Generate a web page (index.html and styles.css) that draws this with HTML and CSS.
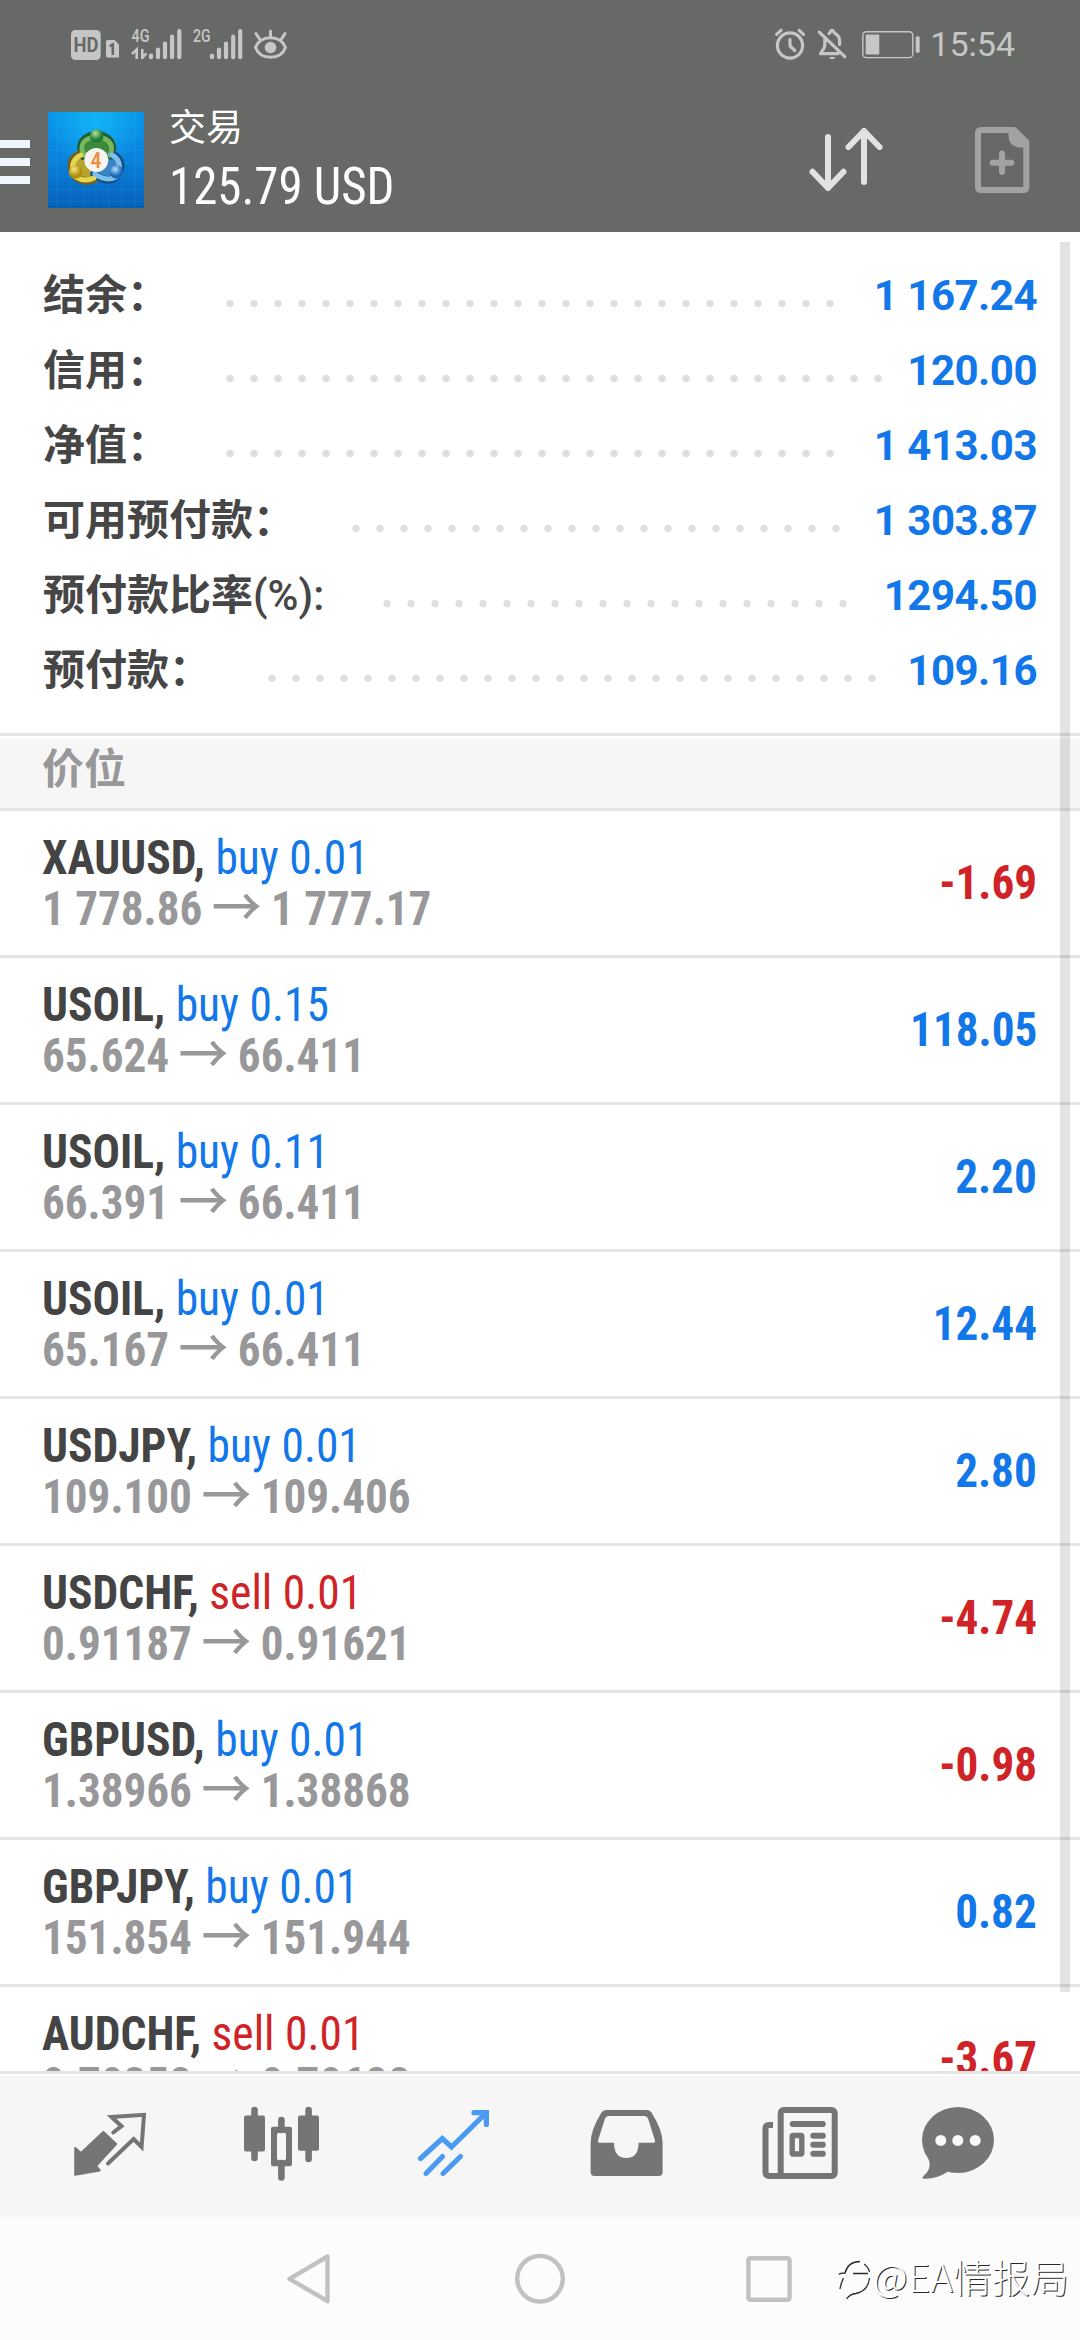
FILE: index.html
```html
<!DOCTYPE html>
<html lang="zh-CN">
<head>
<meta charset="utf-8">
<title>交易</title>
<link rel="stylesheet" href="styles.css">
</head>
<body>
<div class="screen">
  <header class="header">
    <div class="status">
      <div class="status-group">
        <svg class="ic-left" viewBox="70 24 220 40" width="220" height="40">
          <rect x="71" y="30" width="29.7" height="30" rx="4.500" fill="#c6c6c6"/>
          <text x="73.500" y="52" class="hd-text" textLength="25" lengthAdjust="spacingAndGlyphs">HD</text>
          <path d="M107.500 40H114.500L119 44.500V57.500H107.500Q106 57.500 106 56V41.500Q106 40 107.500 40Z" fill="#c6c6c6"/>
          <path d="M109.800 46.200L112.800 44.500V55" fill="none" stroke="#676966" stroke-width="2.600"/>
          <text x="131.500" y="42.300" class="net-text" textLength="18" lengthAdjust="spacingAndGlyphs">4G</text>
          <path d="M132 54L136.700 49.500V59M142.300 49V59M142.300 57.500L146.500 53.300" fill="none" stroke="#c6c6c6" stroke-width="2.600"/>
          <g stroke="#c6c6c6" stroke-width="4.200" stroke-linecap="round">
            <path d="M151 55.500V57.200M158 49.500V57.200M165 43.500V57.200M172.100 36.500V57.200M179.300 31V57.200"/>
            <path d="M212 55.500V57.200M219 49.500V57.200M226 43.500V57.200M233.200 36.500V57.200M240.200 31V57.200"/>
          </g>
          <text x="193" y="42.300" class="net-text" textLength="17.500" lengthAdjust="spacingAndGlyphs">2G</text>
          <g fill="none" stroke="#c6c6c6" stroke-width="3" stroke-linecap="round">
            <path d="M255.500 47.500C258 41 264 37.800 270.500 37.800S283 41 285.500 47.500C283 54 277 57.300 270.500 57.300S258 54 255.500 47.500Z"/>
            <path d="M270.500 31V37M256 33.500L259.500 39M285 33.500L281.500 39"/>
          </g>
          <circle cx="270.500" cy="47.500" r="5.800" fill="#c6c6c6"/>
        </svg>
      </div>
      <div class="status-group">
        <svg viewBox="772 24 150 40" width="150" height="40" fill="none" stroke="#c6c6c6">
          <g stroke-width="3.200" stroke-linecap="round" stroke-linejoin="round">
            <circle cx="790" cy="45.500" r="12.600"/>
            <path d="M790 39.500V46L794.800 50.500M776.700 34.300L781 30.300M803.500 34.300L799.200 30.300"/>
            <path d="M824.800 38.500V45.500C824.800 49 822 50.500 820.500 53.700H838M829 33.500Q830.300 32.700 830.500 31.500Q832 29.300 833.500 31.500Q834 33 836 34.200Q839.600 36.500 839.600 41V44.500M819.200 32.200L844.800 56.700"/>
          </g>
          <path d="M829 57H835.500Q834.500 59.300 832.200 59.300T829 57Z" fill="#c6c6c6" stroke="none"/>
          <rect x="862.800" y="31.800" width="50" height="25.800" rx="3.500" stroke-width="1.400"/>
          <rect x="865.700" y="34.400" width="13.600" height="20.200" rx="1" fill="#c6c6c6" stroke="none"/>
          <rect x="915.700" y="36.300" width="4" height="16.400" rx="1.500" fill="#c6c6c6" stroke="none"/>
        </svg>
        <span class="clock">15:54</span>
      </div>
    </div>
    <div class="toolbar">
      <div class="burger"><i></i><i></i><i></i></div>
      <svg class="logo" viewBox="48 112 96 96" width="96" height="96">
        <defs>
          <linearGradient id="sky" x1="0" y1="0" x2="0" y2="1"><stop offset="0" stop-color="#0795ea"/><stop offset=".5" stop-color="#0a82dc"/><stop offset="1" stop-color="#0560b8"/></linearGradient>
          <radialGradient id="glow" cx=".5" cy=".1" r=".5"><stop offset="0" stop-color="#16c0fb" stop-opacity=".75"/><stop offset="1" stop-color="#16c0fb" stop-opacity="0"/></radialGradient>
          <radialGradient id="gg" cx=".4" cy=".3"><stop offset="0" stop-color="#b4e59a"/><stop offset="1" stop-color="#1e7b37"/></radialGradient>
          <radialGradient id="gy" cx=".4" cy=".3"><stop offset="0" stop-color="#f7ea7c"/><stop offset="1" stop-color="#b08c10"/></radialGradient>
          <radialGradient id="gb" cx=".4" cy=".3"><stop offset="0" stop-color="#b5e0ff"/><stop offset="1" stop-color="#1a66b8"/></radialGradient>
        </defs>
        <rect x="48" y="112" width="96" height="96" fill="url(#sky)"/>
        <rect x="48" y="112" width="96" height="96" fill="url(#glow)"/>
        <path d="M57 112V208M70 112V208M83 112V208M96 112V208M109 112V208M122 112V208M135 112V208M48 124H144M48 137H144M48 150H144M48 163H144M48 176H144M48 189H144M48 202H144" stroke="#5cc8ff" stroke-opacity=".15" stroke-width=".8"/>
        <circle cx="96.500" cy="148" r="15" fill="#3d8a3c"/>
        <circle cx="86" cy="166.500" r="14.500" fill="#b5a52c"/>
        <circle cx="107" cy="166.500" r="14.500" fill="#3a86c4"/>
        <g fill="none" stroke-linecap="round">
          <path d="M83 156Q77 142 90 136M103 136Q116 142 111 156" stroke="#205d35" stroke-width="7.500"/>
          <path d="M80 154Q69 159 72 170M76 177Q85 184 95 179" stroke="#756018" stroke-width="7.500"/>
          <path d="M112 154Q123 159 120 170M116 177Q107 184 94 174" stroke="#174f80" stroke-width="7.500"/>
          <path d="M84 155Q78 143 90 138M103 138Q115 143 110 155" stroke="#74b85c" stroke-width="5"/>
          <path d="M81 155Q71 160 73 170M76 177Q85 182.500 94 178" stroke="#e4d650" stroke-width="5"/>
          <path d="M112 155Q121 160 119 170M116 177Q106 182 95 174" stroke="#7cc0ee" stroke-width="5"/>
        </g>
        <circle cx="96.700" cy="136" r="6.800" fill="url(#gg)"/>
        <circle cx="75.500" cy="172" r="6.800" fill="url(#gy)"/>
        <circle cx="116.500" cy="172" r="6.800" fill="url(#gb)"/>
        <circle cx="96.300" cy="160" r="12" fill="#f5f4f0"/>
        <text x="96" y="167.500" class="logo-num">4</text>
      </svg>
      <div class="titles">
        <div class="title">交易</div>
        <div class="total">125.79 USD</div>
      </div>
      <svg class="sort" viewBox="806 124 80 72" width="80" height="72" fill="none" stroke="#e2e2e0" stroke-width="6" stroke-linecap="round" stroke-linejoin="round">
        <path d="M828 137V188M812.500 171.800L828 188L843.500 171.800M864 182V131M848.500 147L864 131L879.500 147"/>
      </svg>
      <svg class="new" viewBox="970 124 64 72" width="64" height="72" fill="none" stroke="#a2a2a1" stroke-width="6" stroke-linecap="round" stroke-linejoin="round">
        <path d="M981 130H1014L1026.300 142V187Q1026.300 190 1023.300 190H981Q978 190 978 187V133Q978 130 981 130Z"/>
        <path d="M1008.500 130H1014L1026 142V147.500H1019Q1008.500 146 1008.500 136Z" fill="#a2a2a1" stroke="none"/>
        <path d="M1002 153.500V172M992.700 162.800H1011.300"/>
      </svg>
    </div>
  </header>

  <main class="content">
    <section class="summary">
      <div class="sum"><span>结余：</span><i class="dots" style="--n:26"></i><b>1 167.24</b></div>
      <div class="sum"><span>信用：</span><i class="dots" style="--n:28"></i><b>120.00</b></div>
      <div class="sum"><span>净值：</span><i class="dots" style="--n:26"></i><b>1 413.03</b></div>
      <div class="sum"><span>可用预付款：</span><i class="dots" style="--n:21"></i><b>1 303.87</b></div>
      <div class="sum"><span>预付款比率<em>(%):</em></span><i class="dots" style="--n:20"></i><b>1294.50</b></div>
      <div class="sum"><span>预付款：</span><i class="dots" style="--n:26"></i><b>109.16</b></div>
    </section>
    <h2 class="section">价位</h2>
    <div class="row"><div><p class="sym">XAUUSD, <span class="buy">buy 0.01</span></p><p class="px">1 778.86 <span class="arr">→</span> 1 777.17</p></div><b class="loss">-1.69</b></div>
    <div class="row"><div><p class="sym">USOIL, <span class="buy">buy 0.15</span></p><p class="px">65.624 <span class="arr">→</span> 66.411</p></div><b class="gain">118.05</b></div>
    <div class="row"><div><p class="sym">USOIL, <span class="buy">buy 0.11</span></p><p class="px">66.391 <span class="arr">→</span> 66.411</p></div><b class="gain">2.20</b></div>
    <div class="row"><div><p class="sym">USOIL, <span class="buy">buy 0.01</span></p><p class="px">65.167 <span class="arr">→</span> 66.411</p></div><b class="gain">12.44</b></div>
    <div class="row"><div><p class="sym">USDJPY, <span class="buy">buy 0.01</span></p><p class="px">109.100 <span class="arr">→</span> 109.406</p></div><b class="gain">2.80</b></div>
    <div class="row"><div><p class="sym">USDCHF, <span class="sell">sell 0.01</span></p><p class="px">0.91187 <span class="arr">→</span> 0.91621</p></div><b class="loss">-4.74</b></div>
    <div class="row"><div><p class="sym">GBPUSD, <span class="buy">buy 0.01</span></p><p class="px">1.38966 <span class="arr">→</span> 1.38868</p></div><b class="loss">-0.98</b></div>
    <div class="row"><div><p class="sym">GBPJPY, <span class="buy">buy 0.01</span></p><p class="px">151.854 <span class="arr">→</span> 151.944</p></div><b class="gain">0.82</b></div>
    <div class="row"><div><p class="sym">AUDCHF, <span class="sell">sell 0.01</span></p><p class="px">0.70358 <span class="arr">→</span> 0.70688</p></div><b class="loss">-3.67</b></div>
    <div class="scrollbar"></div>
  </main>

  <nav class="tabs">
    <svg viewBox="70 2104 80 80" width="80" height="80" fill="none" stroke="#757575" stroke-linejoin="round" stroke-linecap="round">
      <path d="M75.200 2148L81 2153L103.300 2132L116.200 2144L96 2166L99.800 2170.500L75.200 2174.800Z" fill="#757575" stroke-width="2"/>
      <path d="M113.300 2132.500L121.500 2126.200L111.500 2117L144 2114.800L141.600 2147L133.600 2139L108 2163.500" stroke-width="4" stroke-linejoin="miter"/>
    </svg>
    <svg viewBox="241 2104 80 80" width="80" height="80" fill="#757575">
      <path d="M254.500 2110V2158M281.400 2120V2130M281.400 2163V2177.500M308.600 2110V2159" stroke="#757575" stroke-width="6.600" stroke-linecap="round"/>
      <rect x="244" y="2115.500" width="21" height="36" rx="2"/>
      <path fill-rule="evenodd" d="M273 2126.700H290Q292 2126.700 292 2128.700V2164.300Q292 2166.300 290 2166.300H273Q271 2166.300 271 2164.300V2128.700Q271 2126.700 273 2126.700ZM279 2132.700Q277 2132.700 277 2134.700V2158.300Q277 2160.300 279 2160.300H284Q286 2160.300 286 2158.300V2134.700Q286 2132.700 284 2132.700Z"/>
      <rect x="298" y="2115.500" width="21" height="35.200" rx="2"/>
    </svg>
    <svg viewBox="413 2104 80 80" width="80" height="80" fill="none" stroke="#4a9af4" stroke-width="5.200" stroke-linejoin="miter" stroke-linecap="round">
      <path d="M420.500 2158.500L442.300 2138.500L451.500 2147L486 2113M426 2173.500L442.500 2156.500M443 2173.500L460.500 2156.500"/>
      <path d="M474 2112.700H486.400V2124.500" />
      <path d="M478 2113H486V2122Z" fill="#4a9af4" stroke="none"/>
    </svg>
    <svg viewBox="586 2104 80 80" width="80" height="80" fill="#757575">
      <path fill-rule="evenodd" d="M606 2110H647Q650 2110 651.500 2112.500Q662.600 2130 662.600 2143V2172Q662.600 2176 658.600 2176H594.600Q590.600 2176 590.600 2172V2143Q590.600 2130 601.500 2112.500Q603 2110 606 2110ZM608.500 2116Q606 2116 605 2118.500L598 2140.500Q597.500 2142.700 599.500 2142.700H614Q614 2158 626.300 2158T638.600 2142.700H653.500Q655.500 2142.700 655 2140.500L648 2118.500Q647 2116 644.500 2116Z"/>
    </svg>
    <svg viewBox="760 2104 80 80" width="80" height="80" fill="none" stroke="#757575" stroke-width="6">
      <rect x="780.700" y="2110" width="54" height="66" rx="3"/>
      <path d="M773 2125H769Q765.500 2125 765.500 2128.500V2172Q765.500 2176 769.500 2176H782"/>
      <path d="M792.700 2124H822.800M813.300 2135.700H822.800M813.300 2144.700H822.800M813.300 2153.700H822.800" stroke-linecap="round"/>
      <rect x="792.200" y="2135.500" width="9.600" height="18.500" rx="1" stroke-width="5.400"/>
    </svg>
    <svg viewBox="918 2104 80 80" width="80" height="80" fill="#757575">
      <ellipse cx="958" cy="2140" rx="36" ry="33"/>
      <path d="M928 2158Q933 2168 923 2176.500Q921.500 2179 925 2178.800Q938 2178.500 948 2171.500L944 2162Z"/>
      <g fill="#f9f9f9"><circle cx="940.800" cy="2140.400" r="5.500"/><circle cx="957.800" cy="2140.400" r="5.500"/><circle cx="975.200" cy="2140.400" r="5.500"/></g>
    </svg>
  </nav>

  <footer class="sysbar">
    <svg viewBox="284 2250 512 58" width="512" height="58" fill="none" stroke="#c1c1c1" stroke-width="4.400" stroke-linejoin="round">
      <path d="M289.500 2278.800L327.500 2256.500V2301.200Z"/>
      <circle cx="540" cy="2278.700" r="22.800"/>
      <rect x="748.400" y="2258.200" width="41.200" height="41.600" rx="2"/>
    </svg>
    <div class="mark">
      <svg viewBox="836 2258 37 48" width="37" height="48" fill="none" stroke="#2a2a2a" stroke-width="1.300">
        <path d="M839 2277.500Q840 2276 845 2276Q848 2264.500 860 2264.500M864 2267Q868.500 2270 869.500 2275M853 2276.500H868M843.500 2281Q841 2286 840 2292M869.500 2281Q868 2294 856 2296.500Q850 2297 846.500 2302"/>
      </svg>
      <span>@EA情报局</span>
    </div>
  </footer>
</div>
</body>
</html>
```
FILE: styles.css
```css
* { box-sizing: border-box; margin: 0; padding: 0; }
body { background: #fff; }
.screen {
  width: 1080px; height: 2340px; overflow: hidden;
  display: flex; flex-direction: column;
  font-family: Roboto, "Noto Sans CJK SC", sans-serif;
}

.header { height: 232px; background: #676966; flex: none; }
.status { height: 88px; padding: 0 65px 0 70px; display: flex; justify-content: space-between; align-items: center; }
.status-group { display: flex; align-items: center; }
.clock { font-size: 34px; line-height: 40px; color: #c6c6c6; margin-left: 8px; }
.hd-text { font: 700 21px Roboto, sans-serif; fill: #676966; }
.net-text { font: 500 18.500px Roboto, sans-serif; fill: #c6c6c6; }
.logo-num { font: 500 22px Roboto, sans-serif; font-stretch: 75%; fill: #f08c3c; text-anchor: middle; }

.toolbar { height: 144px; display: flex; align-items: center; }
.burger { width: 30px; display: flex; flex-direction: column; gap: 10px; padding-top: 4px; }
.burger i { height: 8px; background: #f0f6fd; }
.logo { margin-left: 18px; }
.titles { margin-left: 25px; padding-top: 6px; flex: 1; color: #fff; }
.title { font-size: 37px; line-height: 46px; font-weight: 400; }
.total {
  font-family: "Roboto Condensed", Roboto, sans-serif; font-stretch: 75%; font-size: 52px; line-height: 66px;
  padding-top: 2px; transform: scaleX(.94); transform-origin: left;
}
.new { margin: 0 46px 0 84px; }

.content { height: 1839px; flex: none; overflow: hidden; position: relative; }
.summary { height: 501px; padding: 26px 43px 0 43px; }
.sum { height: 75px; display: flex; align-items: center; font-size: 42px; line-height: 75px; color: #464646; }
.sum span { font-weight: 700; white-space: nowrap; }
.sum em { font-weight: 500; font-style: normal; margin-right: 2px; }
.sum b { margin-left: auto; color: #1277e8; font-weight: 700; letter-spacing: -.5px; }
.dots {
  margin: 15px 0 0 49px; height: 9px; width: calc(var(--n) * 24px);
  background: radial-gradient(circle at 12px 4.500px, #dfdfdf 3.200px, transparent 4.200px) 0 0 / 24px 9px repeat-x;
}
.section {
  height: 78px; border-top: 3px solid #e4e4e4; border-bottom: 3px solid #e4e4e4;
  background: linear-gradient(#fff 3px, #f6f6f6 3px);
  padding-left: 42px; font-size: 42px; line-height: 68px; font-weight: 700; color: #98989a;
}
.row {
  height: 147px; padding: 0 43px 0 42px; border-bottom: 3px solid #e4e4e4;
  display: flex; align-items: center; justify-content: space-between;
  font-family: "Roboto Condensed", Roboto, sans-serif; font-stretch: 75%;
  font-size: 48px; line-height: 51px; font-weight: 700;
}
.row p { height: 51px; white-space: nowrap; transform: scaleX(.948); transform-origin: left; }
.row .px { color: #98989a; transform: scaleX(.94); }
.row b { font-weight: 700; padding-bottom: 2px; transform: scaleX(.94); transform-origin: right; }
.sym { color: #444; }
.sym span { font-weight: 400; }
.arr { font: 500 53px/1px "Noto Sans CJK SC", sans-serif; margin: 0 -1px; position: relative; top: 2px; }
.buy, .gain { color: #1277e8; }
.sell, .loss { color: #cf2327; }
.scrollbar { position: absolute; right: 10px; top: 10px; width: 10px; height: 1750px; background: rgba(0,0,0,.11); }

.tabs {
  height: 146px; flex: none; background: linear-gradient(#fff 2px, #f6f6f6 2px);
  border-top: 3px solid #e4e4e4; padding: 30px 0 0 70px;
  display: grid; grid-template-columns: 171px 172px 173px 174px 158px 80px;
}
.sysbar { height: 123px; flex: none; background: #fcfcfc; padding-left: 284px; display: flex; align-items: center; }
.mark { margin-left: 40px; display: flex; align-items: center; color: #fff; }
.mark span {
  font: 300 38px/48px "Noto Sans CJK SC", sans-serif; white-space: nowrap; padding-bottom: 5px;
  letter-spacing: .6px; text-shadow: 1px 1px 0 #2a2a2a;
}
```
